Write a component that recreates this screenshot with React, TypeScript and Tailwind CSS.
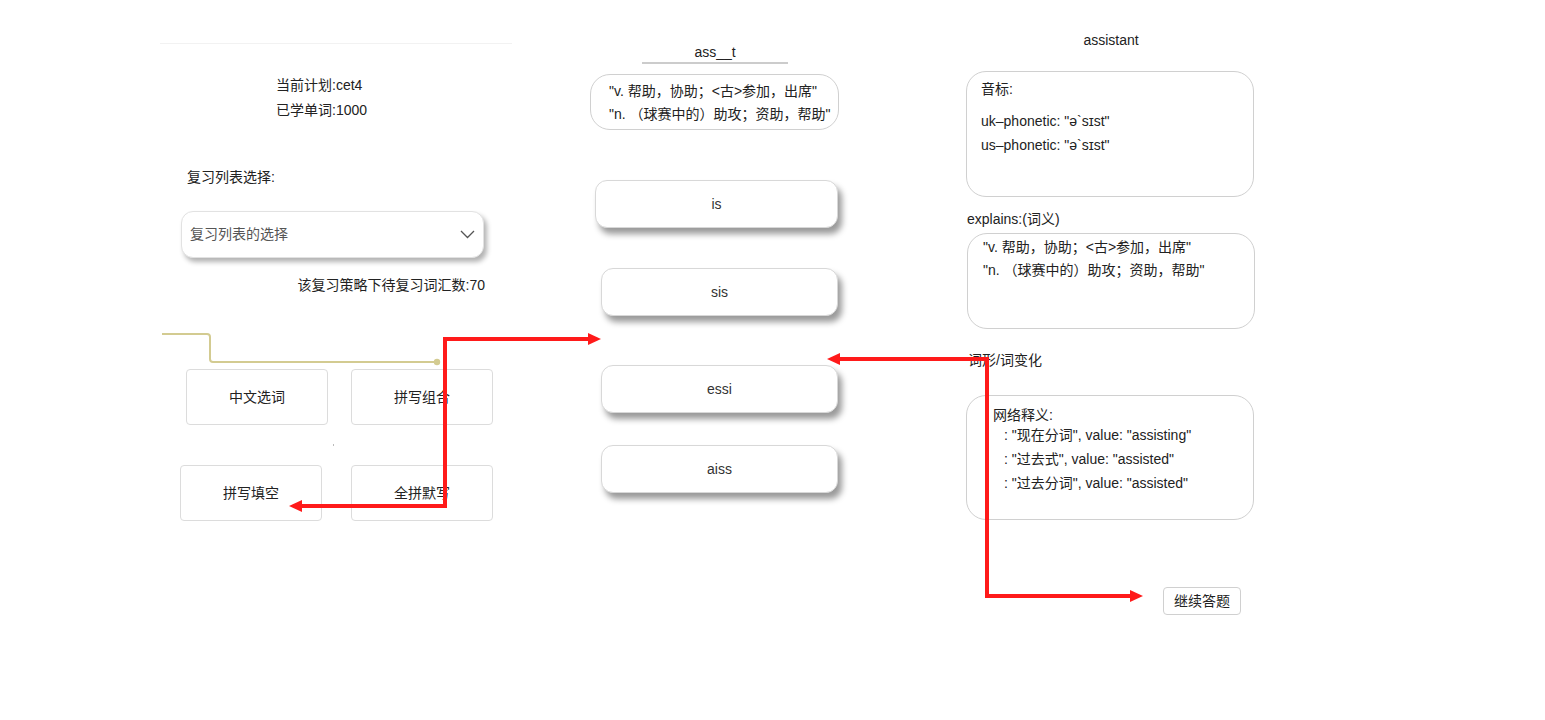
import React from 'react';

const font = { fontFamily: '"Liberation Sans", "Noto Sans CJK SC", sans-serif' };

function OptionCard({ label, className }: { label: string; className: string }) {
  return (
    <div className={`flex h-[48px] items-center justify-center rounded-[12px] border border-[#d8d8d8] bg-white text-[14px] text-[#333] shadow-[4px_6px_6px_rgba(0,0,0,0.4)] ${className}`}>
      {label}
    </div>
  );
}

function ModeButton({ label, className }: { label: string; className: string }) {
  return (
    <button className={`flex h-[56px] w-[142px] items-center justify-center rounded-[4px] border border-[#dcdcdc] bg-white text-[14px] text-[#222] ${className}`}>
      {label}
    </button>
  );
}

function Overlay() {
  return (
    <svg className="pointer-events-none absolute left-0 top-0" width="1545" height="720" viewBox="0 0 1545 720">
      {/* olive connector */}
      <path d="M162 334 H207 Q210 334 210 337 V359 Q210 362 213 362 H437" fill="none" stroke="#d3cb91" strokeWidth="2" />
      <circle cx="437" cy="362" r="3.2" fill="#d3cb91" />
      {/* red arrow: spelling fill -> options */}
      <polyline points="300,506 445,506 445,339 590,339" fill="none" stroke="#ff1a1a" strokeWidth="4" strokeLinejoin="miter" />
      <polygon points="289,506 302,500 302,512" fill="#ff1a1a" />
      <polygon points="601,339 588,333 588,345" fill="#ff1a1a" />
      {/* red arrow: detail -> options / continue */}
      <polyline points="838,359 987,359 987,596 1132,596" fill="none" stroke="#ff1a1a" strokeWidth="4" strokeLinejoin="miter" />
      <polygon points="827,359 840,353 840,365" fill="#ff1a1a" />
      <polygon points="1143,596 1130,590 1130,602" fill="#ff1a1a" />
    </svg>
  );
}

export default function App() {
  return (
    <div className="relative min-h-[720px] w-full overflow-hidden bg-white text-[14px] text-[#222]" style={font}>
      <div className="flex pl-[160px]">
        {/* left: plan + review mode */}
        <div className="w-[352px]">
          <div className="mt-[43px] h-px bg-[#f2f2f2]" />
          <div className="mt-[29px] pl-[116px] leading-[25px]">
            <p>当前计划:cet4</p>
            <p>已学单词:1000</p>
          </div>
          <p className="mt-[42px] pl-[27px] leading-[24px]">复习列表选择:</p>
          <div className="ml-[21px] mt-[22px] flex h-[47px] w-[303px] items-center justify-between rounded-[12px] border border-[#e2e2e2] bg-white pl-[8px] pr-[8px] text-[#555] shadow-[3px_4px_5px_rgba(0,0,0,0.3)]">
            <span>复习列表的选择</span>
            <svg width="15" height="9" viewBox="0 0 15 9" fill="none" stroke="#555" strokeWidth="1.3">
              <path d="M1 1 L7.5 7.5 L14 1" />
            </svg>
          </div>
          <p className="mt-[15px] w-[325px] text-right leading-[24px]">该复习策略下待复习词汇数:70</p>
          <div className="mt-[72px] flex">
            <ModeButton label="中文选词" className="ml-[26px]" />
            <ModeButton label="拼写组合" className="ml-[23px]" />
          </div>
          <div className="flex h-[40px] items-center">
            <span className="ml-[173px] h-[2px] w-[1px] bg-[#bbb]" />
          </div>
          <div className="flex">
            <ModeButton label="拼写填空" className="ml-[20px]" />
            <ModeButton label="全拼默写" className="ml-[29px]" />
          </div>
        </div>

        {/* middle: question */}
        <div className="ml-[78px] w-[250px]">
          <div className="mx-auto mt-[42px] w-[146px] border-b-2 border-[#cccccc] text-center leading-[20px]">ass__t</div>
          <div className="mt-[10px] h-[56px] w-[249px] rounded-[20px] border border-[#d0d0d0] pl-[18px] pt-[5px] leading-[23px]">
            <p>"v. 帮助，协助；&lt;古&gt;参加，出席"</p>
            <p>"n. （球赛中的）助攻；资助，帮助"</p>
          </div>
          <OptionCard label="is" className="ml-[5px] mt-[50px] w-[243px]" />
          <OptionCard label="sis" className="ml-[11px] mt-[40px] w-[237px]" />
          <OptionCard label="essi" className="ml-[11px] mt-[49px] w-[237px]" />
          <OptionCard label="aiss" className="ml-[11px] mt-[32px] w-[237px]" />
        </div>

        {/* right: word detail */}
        <div className="ml-[126px] w-[290px]">
          <p className="mt-[28px] text-center leading-[24px]">assistant</p>
          <div className="mt-[19px] h-[126px] w-[288px] rounded-[20px] border border-[#d0d0d0] pl-[14px] pt-[5px] leading-[24px]">
            <p>音标:</p>
            <p className="mt-[8px]">uk–phonetic: "ə`sɪst"</p>
            <p>us–phonetic: "ə`sɪst"</p>
          </div>
          <p className="ml-px mt-[10px] leading-[24px]">explains:(词义)</p>
          <div className="ml-px mt-[2px] h-[96px] w-[288px] rounded-[20px] border border-[#d0d0d0] pl-[15px] pt-[2px] leading-[23px]">
            <p>"v. 帮助，协助；&lt;古&gt;参加，出席"</p>
            <p>"n. （球赛中的）助攻；资助，帮助"</p>
          </div>
          <p className="ml-[2px] mt-[19px] leading-[24px]">词形/词变化</p>
          <div className="mt-[23px] h-[125px] w-[288px] rounded-[20px] border border-[#d0d0d0] pl-[26px] pt-[9px]">
            <p className="leading-[20px]">网络释义:</p>
            <div className="pl-[11px]">
              <p className="leading-[20px]">: "现在分词", value: "assisting"</p>
              <p className="mt-[2px] leading-[24px]">: "过去式", value: "assisted"</p>
              <p className="leading-[25px]">: "过去分词", value: "assisted"</p>
            </div>
          </div>
          <button className="ml-[197px] mt-[67px] flex h-[28px] w-[78px] items-center justify-center rounded-[4px] border border-[#d0d0d0] bg-white text-[14px] text-[#222]">
            继续答题
          </button>
        </div>
      </div>
      <Overlay />
    </div>
  );
}
